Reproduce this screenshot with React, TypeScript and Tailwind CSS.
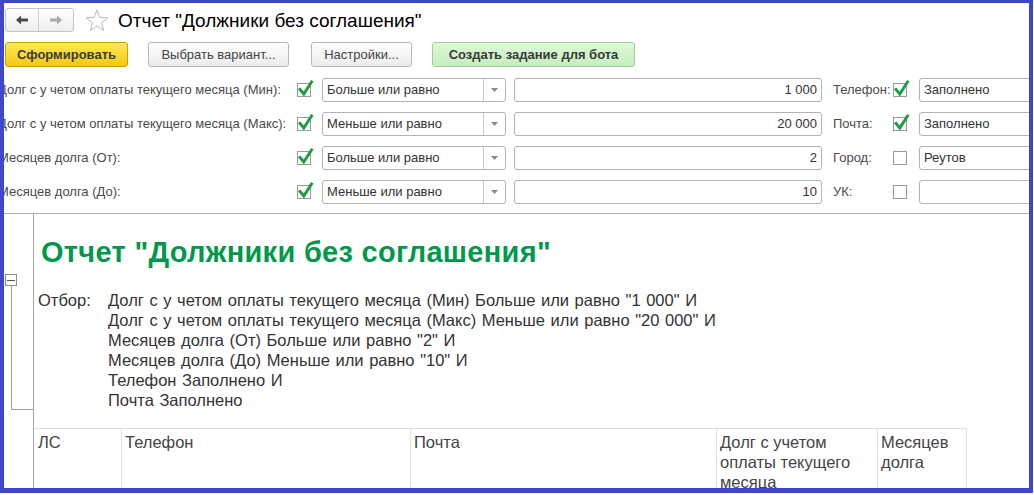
import React from "react"

const FONT = { fontFamily: '"Liberation Sans", Arial, sans-serif' }

function Check({ on }: { on: boolean }) {
  return (
    <div className="relative w-[14px] h-[14px] border border-[#9a9a9a] bg-white shrink-0">
      {on && (
        <svg className="absolute -left-[1px] -top-[5px]" width="17" height="19" viewBox="0 0 17 19">
          <path d="M3 10.5 L6.8 15 L14.5 3" fill="none" stroke="#1f9d45" strokeWidth="3" strokeLinecap="square" />
        </svg>
      )}
    </div>
  )
}

function Select({ value }: { value: string }) {
  return (
    <div className="flex w-[184px] h-[24px] border border-[#b3b3b3] rounded-[3px] bg-white shrink-0">
      <div className="flex-1 flex items-center pl-[4px] text-[13px] text-[#333]">{value}</div>
      <div className="w-[22px] border-l border-[#c8c8c8] flex items-center justify-center">
        <svg width="7" height="4" viewBox="0 0 7 4">
          <path d="M0 0 H7 L3.5 4 Z" fill="#888" />
        </svg>
      </div>
    </div>
  )
}

function Field({ value, w, right }: { value: string; w: string; right?: boolean }) {
  return (
    <div
      className={`${w} h-[24px] border border-[#b3b3b3] rounded-[3px] bg-white flex items-center px-[4px] text-[13px] text-[#333] shrink-0 ${
        right ? "justify-end" : ""
      }`}
    >
      {value}
    </div>
  )
}

type Row = { label: string; on: boolean; op: string; val: string; rl: string; ron: boolean; rv: string }

const rows: Row[] = [
  { label: "Долг с у четом оплаты текущего месяца (Мин):", on: true, op: "Больше или равно", val: "1 000", rl: "Телефон:", ron: true, rv: "Заполнено" },
  { label: "Долг с у четом оплаты текущего месяца (Макс):", on: true, op: "Меньше или равно", val: "20 000", rl: "Почта:", ron: true, rv: "Заполнено" },
  { label: "Месяцев долга (От):", on: true, op: "Больше или равно", val: "2", rl: "Город:", ron: false, rv: "Реутов" },
  { label: "Месяцев долга (До):", on: true, op: "Меньше или равно", val: "10", rl: "УК:", ron: false, rv: "" },
]

const filterLines = [
  'Долг с у четом оплаты текущего месяца (Мин) Больше или равно "1 000" И',
  'Долг с у четом оплаты текущего месяца (Макс) Меньше или равно "20 000" И',
  'Месяцев долга (От) Больше или равно "2" И',
  'Месяцев долга (До) Меньше или равно "10" И',
  "Телефон Заполнено И",
  "Почта Заполнено",
]

export default function App() {
  return (
    <div className="w-[1034px] h-[495px] bg-white" style={FONT}>
      <div className="w-[1033px] h-[493px] border-[#3f47cc] border-t-[3px] border-l-[4px] border-r-[4px] border-b-[5px] overflow-hidden flex flex-col">
        {/* top bar */}
        <div className="flex items-center pt-[5px] pl-[1px] h-[29px]">
          <div className="flex h-[24px] border border-[#c4c4c4] rounded-[3px] bg-gradient-to-b from-white to-[#eeeeee]">
            <div className="w-[33px] flex items-center justify-center border-r border-[#d0d0d0]">
              <svg width="12" height="10" viewBox="0 0 12 10">
                <path d="M0 5 L5 0.5 V3.5 H12 V6.5 H5 V9.5 Z" fill="#4b4b4b" />
              </svg>
            </div>
            <div className="w-[34px] flex items-center justify-center">
              <svg width="12" height="10" viewBox="0 0 12 10">
                <path d="M12 5 L7 0.5 V3.5 H0 V6.5 H7 V9.5 Z" fill="#a9a9a9" />
              </svg>
            </div>
          </div>
          <svg className="ml-[11px]" width="24" height="23" viewBox="0 0 24 23">
            <path
              d="M12 1 L14.9 8.4 L22.8 8.8 L16.6 13.8 L18.7 21.5 L12 17.1 L5.3 21.5 L7.4 13.8 L1.2 8.8 L9.1 8.4 Z"
              fill="white"
              stroke="#b9b9b9"
              strokeWidth="1"
            />
          </svg>
          <div className="ml-[9px] text-[19px] text-black leading-none">Отчет "Должники без соглашения"</div>
        </div>

        {/* command bar */}
        <div className="flex items-center mt-[10px] pl-[1px] gap-[20px]">
          <div className="w-[123px] h-[25px] flex items-center justify-center rounded-[3px] border border-[#c9a400] bg-gradient-to-b from-[#ffe94f] to-[#f4c900] text-[13px] font-bold text-[#3a3a3a]">
            Сформировать
          </div>
          <div className="w-[141px] h-[25px] flex items-center justify-center rounded-[3px] border border-[#b8b8b8] bg-gradient-to-b from-white to-[#ececec] text-[13px] text-[#444]">
            Выбрать вариант...
          </div>
          <div className="ml-[2px] w-[101px] h-[25px] flex items-center justify-center rounded-[3px] border border-[#b8b8b8] bg-gradient-to-b from-white to-[#ececec] text-[13px] text-[#444]">
            Настройки...
          </div>
          <div className="w-[203px] h-[25px] flex items-center justify-center rounded-[3px] border border-[#a9c9a2] bg-gradient-to-b from-[#dcf9d6] to-[#c6eebe] text-[13px] font-bold text-[#3a3a3a]">
            Создать задание для бота
          </div>
        </div>

        {/* filters */}
        <div className="flex flex-col gap-[10px] mt-[11px]">
          {rows.map((r) => (
            <div key={r.label} className="flex items-center h-[24px]">
              <div className="-ml-[6px] w-[299px] shrink-0 text-[13px] text-[#4a4a4a] whitespace-nowrap">{r.label}</div>
              <Check on={r.on} />
              <div className="w-[11px] shrink-0" />
              <Select value={r.op} />
              <div className="w-[8px] shrink-0" />
              <Field value={r.val} w="w-[308px]" right />
              <div className="w-[11px] shrink-0" />
              <div className="w-[60px] shrink-0 text-[13px] text-[#4a4a4a]">{r.rl}</div>
              <Check on={r.ron} />
              <div className="w-[12px] shrink-0" />
              <Field value={r.rv} w="w-[130px]" />
            </div>
          ))}
        </div>

        <div className="mt-[9px] h-px bg-[#adadad] shrink-0" />

        {/* report */}
        <div className="flex flex-1 min-h-0">
          <div className="w-[29px] shrink-0 flex flex-col pt-[60px] pl-[1px]">
            <div className="w-[12px] h-[12px] border border-[#8c8c8c] flex items-center justify-center bg-white">
              <div className="w-[8px] h-px bg-[#555]" />
            </div>
            <div className="ml-[6px] w-[22px] h-[124px] border-l border-b border-[#a0a0a0]" />
          </div>
          <div className="flex-1 border-l border-[#a8a8a8] flex flex-col min-h-0">
            <div className="mt-[21px] ml-[7px] text-[29px] leading-[34px] font-bold text-[#00984a] whitespace-nowrap tracking-[0.3px]">
              Отчет "Должники без соглашения"
            </div>
            <div className="mt-[21px] ml-[4px] flex text-[16.5px] leading-[20px] text-[#333] [word-spacing:1px]">
              <div className="w-[70px] shrink-0">Отбор:</div>
              <div className="flex flex-col">
                {filterLines.map((l) => (
                  <div key={l} className="whitespace-nowrap">
                    {l}
                  </div>
                ))}
              </div>
            </div>
            <div className="mt-[18px] flex w-[933px] border-t border-[#e0e0e0] text-[16.5px] leading-[20px] text-[#444] flex-1 min-h-0 overflow-hidden">
              <div className="w-[88px] border-r border-[#e0e0e0] pl-[4px] pt-[3px]">ЛС</div>
              <div className="w-[289px] border-r border-[#e0e0e0] pl-[3px] pt-[3px]">Телефон</div>
              <div className="w-[306px] border-r border-[#e0e0e0] pl-[3px] pt-[3px]">Почта</div>
              <div className="w-[161px] border-r border-[#e0e0e0] pl-[3px] pt-[3px]">
                Долг с учетом
                <br />
                оплаты текущего
                <br />
                месяца
              </div>
              <div className="w-[89px] border-r border-[#e0e0e0] pl-[3px] pt-[3px]">
                Месяцев
                <br />
                долга
              </div>
            </div>
          </div>
        </div>
      </div>
    </div>
  )
}
